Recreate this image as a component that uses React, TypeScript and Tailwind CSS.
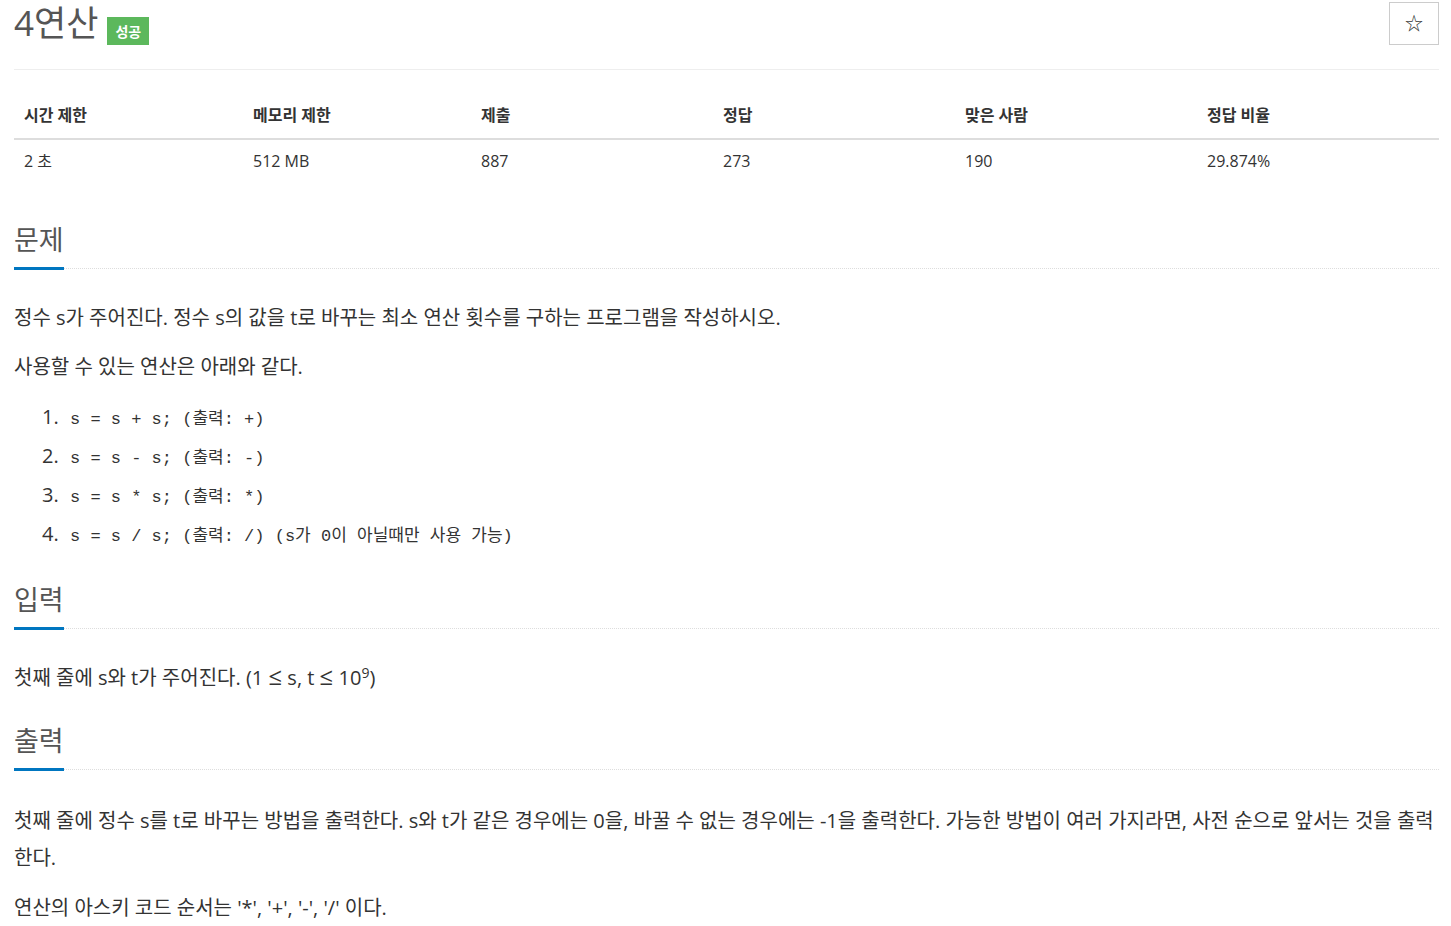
import React from 'react';

const FONT = '[font-family:"Open_Sans","Noto_Sans_CJK_KR",sans-serif]';
const MONO = '[font-family:"Liberation_Mono","Noto_Sans_CJK_KR",monospace]';

const stats = [
  { label: '시간 제한', value: '2 초', w: 'w-[229px]' },
  { label: '메모리 제한', value: '512 MB', w: 'w-[228px]' },
  { label: '제출', value: '887', w: 'w-[242px]' },
  { label: '정답', value: '273', w: 'w-[242px]' },
  { label: '맞은 사람', value: '190', w: 'w-[242px]' },
  { label: '정답 비율', value: '29.874%', w: 'flex-1' },
];

const ops = [
  's = s + s; (출력: +)',
  's = s - s; (출력: -)',
  's = s * s; (출력: *)',
  's = s / s; (출력: /) (s가 0이 아닐때만 사용 가능)',
];

function SectionTitle({ title, className }: { title: string; className?: string }) {
  return (
    <div className={`flex items-end ${className ?? ''}`}>
      <h2 className="border-b-[3px] border-[#0076c0] pb-[7px] text-[27px] leading-[40px] font-normal text-[#555]">
        {title}
      </h2>
      <div className="mb-[1px] flex-1 border-b border-dotted border-[#ddd]" />
    </div>
  );
}

export default function App() {
  return (
    <div className={`min-h-screen bg-white pl-[14px] pr-[12px] text-[#333] ${FONT}`}>
      {/* Title */}
      <div className="flex items-start justify-between border-b border-[#eee] pb-[23px]">
        <div className="flex items-start">
          <h1 className="text-[35px] leading-[46px] font-normal text-[#555]">4연산</h1>
          <span className="mt-[17px] ml-[9px] flex h-[28px] items-center bg-[#5cb85c] px-[8px] text-[14px] font-semibold text-white">
            성공
          </span>
        </div>
        <button className="mt-[2px] flex h-[43px] w-[50px] items-center justify-center border border-[#ccc] bg-white text-[18px] text-[#333]">
          ☆
        </button>
      </div>

      {/* Stats table */}
      <div className="mt-[22px] text-[16px]">
        <div className="flex border-b-2 border-[#ddd]">
          {stats.map((s) => (
            <div key={s.label} className={`${s.w} px-[10px] py-[12px] leading-[22px] font-bold`}>
              {s.label}
            </div>
          ))}
        </div>
        <div className="flex">
          {stats.map((s) => (
            <div key={s.label} className={`${s.w} px-[10px] py-[10px] leading-[22px]`}>
              {s.value}
            </div>
          ))}
        </div>
      </div>

      {/* 문제 */}
      <SectionTitle title="문제" className="mt-[38px]" />
      <div className="mt-[29px] text-[20px] leading-[37px]">
        <p className="mb-[12px]">정수 s가 주어진다. 정수 s의 값을 t로 바꾸는 최소 연산 횟수를 구하는 프로그램을 작성하시오.</p>
        <p className="mb-[12px]">사용할 수 있는 연산은 아래와 같다.</p>
        <ol className="list-decimal pl-[50px]">
          {ops.map((op) => (
            <li key={op} className="h-[39px] pl-[6px] leading-[39px]">
              <code className={`text-[17px] leading-none ${MONO}`}>{op}</code>
            </li>
          ))}
        </ol>
      </div>

      {/* 입력 */}
      <SectionTitle title="입력" className="mt-[27px]" />
      <div className="mt-[29px] text-[20px] leading-[37px]">
        <p>
          첫째 줄에 s와 t가 주어진다. (1 <span className="text-[24px] leading-none">≤</span> s, t{' '}
          <span className="text-[24px] leading-none">≤</span> 10<sup className="text-[14px]">9</sup>)
        </p>
      </div>

      {/* 출력 */}
      <SectionTitle title="출력" className="mt-[25px]" />
      <div className="mt-[31px] text-[20px] leading-[37px]">
        <p className="mb-[13px]">
          첫째 줄에 정수 s를 t로 바꾸는 방법을 출력한다. s와 t가 같은 경우에는 0을, 바꿀 수 없는 경우에는 -1을 출력한다. 가능한 방법이 여러 가지라면, 사전 순으로 앞서는 것을 출력한다.
        </p>
        <p>연산의 아스키 코드 순서는 '*', '+', '-', '/' 이다.</p>
      </div>
    </div>
  );
}
